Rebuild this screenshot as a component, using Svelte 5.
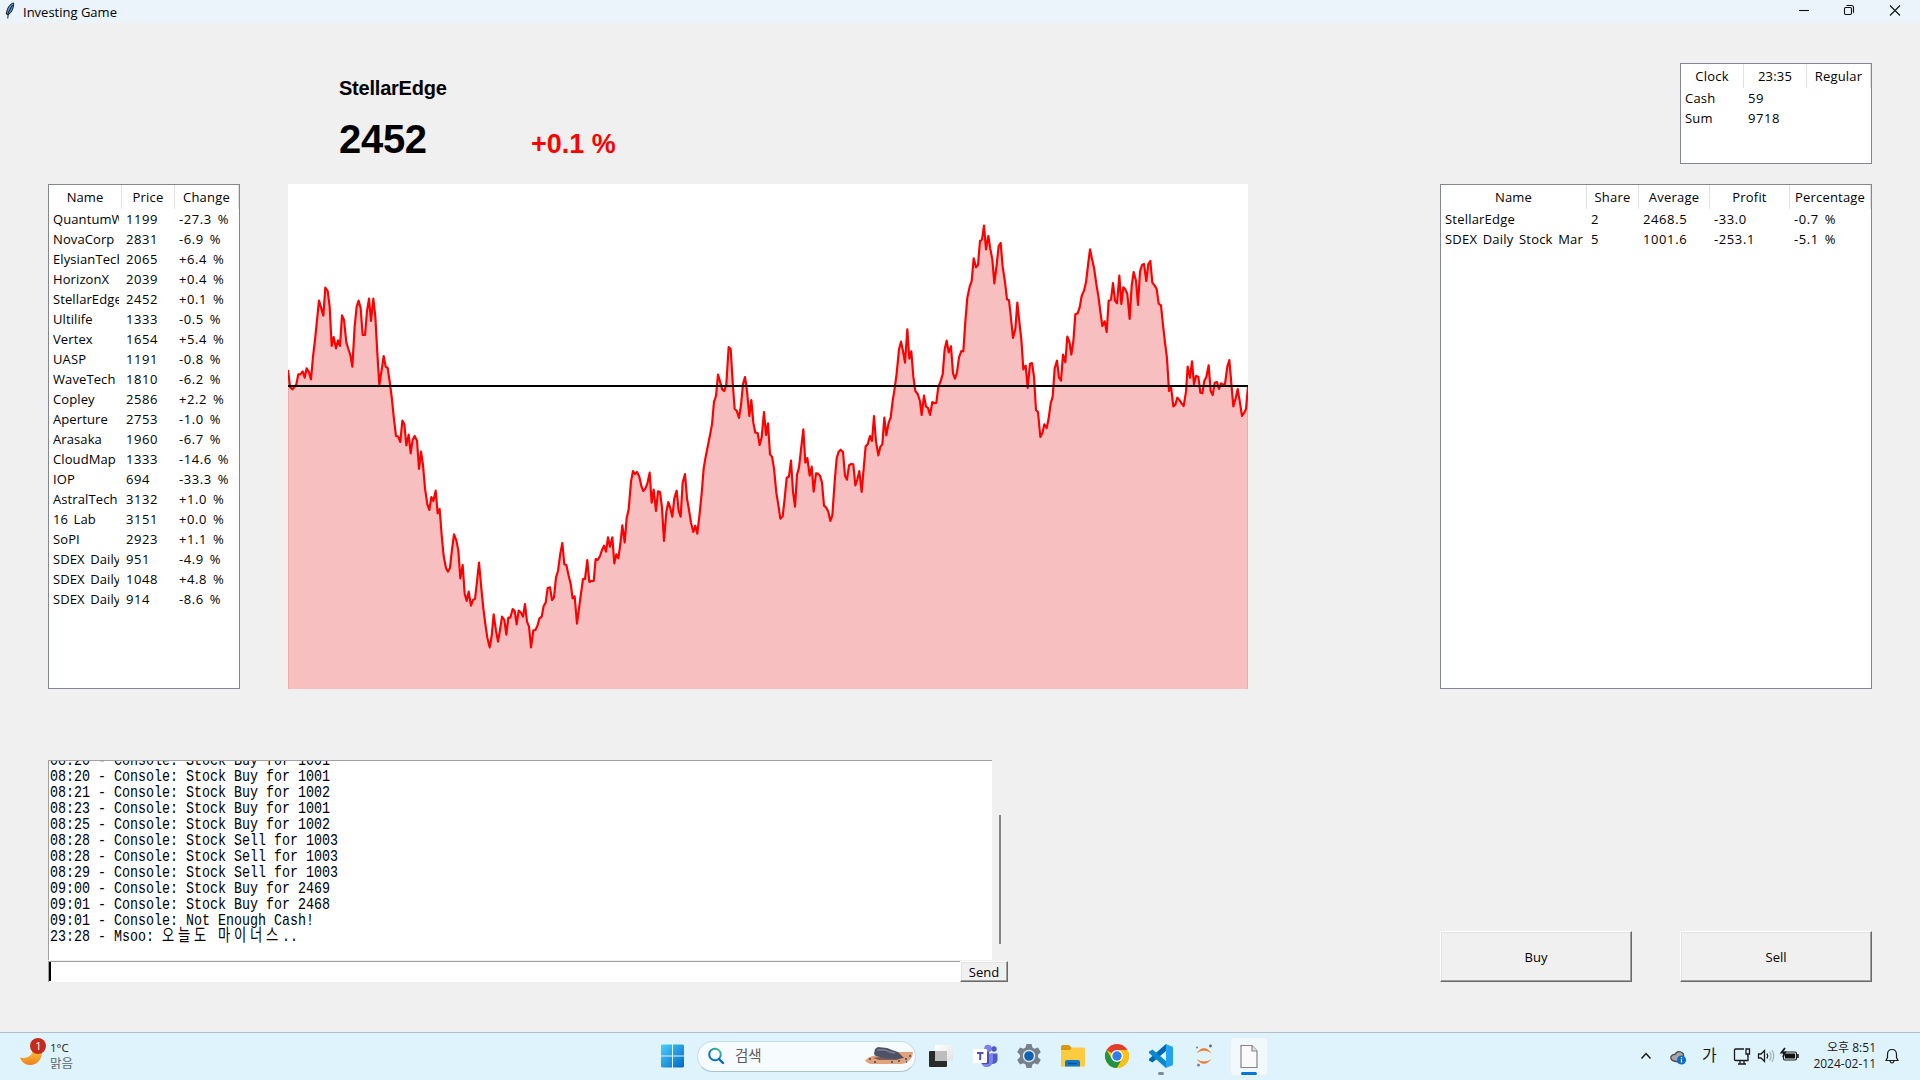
<script>
  const stocks = [
    ['QuantumW', '1199', '-27.3 %'], ['NovaCorp', '2831', '-6.9 %'], ['ElysianTech', '2065', '+6.4 %'],
    ['HorizonX', '2039', '+0.4 %'], ['StellarEdge', '2452', '+0.1 %'], ['Ultilife', '1333', '-0.5 %'],
    ['Vertex', '1654', '+5.4 %'], ['UASP', '1191', '-0.8 %'], ['WaveTech', '1810', '-6.2 %'],
    ['Copley', '2586', '+2.2 %'], ['Aperture', '2753', '-1.0 %'], ['Arasaka', '1960', '-6.7 %'],
    ['CloudMap', '1333', '-14.6 %'], ['IOP', '694', '-33.3 %'], ['AstralTech', '3132', '+1.0 %'],
    ['16 Lab', '3151', '+0.0 %'], ['SoPI', '2923', '+1.1 %'], ['SDEX Daily', '951', '-4.9 %'],
    ['SDEX Daily', '1048', '+4.8 %'], ['SDEX Daily', '914', '-8.6 %'],
  ];
  const holdings = [
    ['StellarEdge', '2', '2468.5', '-33.0', '-0.7 %'],
    ['SDEX Daily Stock Mar', '5', '1001.6', '-253.1', '-5.1 %'],
  ];
  const account = [['Cash', '59', ''], ['Sum', '9718', '']];
  const log = [
    '08:20 - Console: Stock Buy for 1001', '08:20 - Console: Stock Buy for 1001',
    '08:21 - Console: Stock Buy for 1002', '08:23 - Console: Stock Buy for 1001',
    '08:25 - Console: Stock Buy for 1002', '08:28 - Console: Stock Sell for 1003',
    '08:28 - Console: Stock Sell for 1003', '08:29 - Console: Stock Sell for 1003',
    '09:00 - Console: Stock Buy for 2469', '09:01 - Console: Stock Buy for 2468',
    '09:01 - Console: Not Enough Cash!',
  ];

  // Price history in thirds of a pixel, in three blocks: [x offset, samples].
  const blocks = [
    [-24, '24,570 30,620 37,628 43,621 49,613 55,583 61,583 68,574 74,593 80,565 87,577 93,598 99,530 105,480 111,420 117,362 124,386 130,407 136,323 143,333 149,380 155,498 161,471 168,505 174,481 180,498 186,406 192,420 199,487 205,507 211,525 217,560 224,440 230,380 236,362 242,385 248,465 255,465 261,393 267,356 273,423 280,356 286,410 292,520 298,615 305,570 311,528 317,560 323,564 329,605 335,650 342,718 348,768 354,769 361,786 367,722 373,732 379,796 386,764 392,820 398,779 404,768 411,782 417,867 423,815 429,855 435,925 442,973 448,990 454,951 460,963 467,932 473,1000 479,987 485,1065 491,1128 498,1164 504,1175 510,1163 516,1108 522,1063 529,1081 535,1112 541,1195 548,1155 554,1241 560,1263 566,1235 573,1277 579,1260 585,1257 591,1205 597,1148 604,1225 610,1285 616,1332 622,1373 629,1402 635,1368 641,1303 648,1352 654,1385 660,1350 666,1310 673,1320 679,1364 685,1313 691,1313 698,1287 704,1293 710,1333 716,1292 722,1297 729,1310 735,1272 741,1325 747,1340 753,1402 760,1351 766,1350 772,1338 778,1316 785,1310 791,1278 797,1268 803,1224 810,1222 816,1260 822,1252 828,1192 834,1173 841,1120 847,1089 853,1153 859,1155 866,1187 872,1211 878,1255 884,1249 891,1331 897,1285 903,1240 909,1197 915,1197 922,1140 928,1206 934,1203 941,1203 947,1137 953,1140'],
    [936, '0,1128 6,1110 12,1097 18,1115 24,1072 30,1100 37,1072 43,1150 49,1123 55,1135 61,1092 67,1036 74,1087 80,1015 86,988 93,905 99,873 105,882 111,876 118,890 124,918 130,933 136,926 142,911 149,878 155,968 161,929 168,993 174,934 180,936 186,983 192,1083 199,995 205,966 211,985 217,1010 223,955 230,932 236,993 242,1010 248,908 255,882 261,955 267,990 273,1028 280,1056 286,1037 292,1061 299,1000 305,940 311,865 317,830 323,800 330,765 336,733 342,665 348,648 354,584 361,608 367,629 373,633 379,612 386,501 392,507 398,605 404,687 410,692 417,714 423,675 429,612 435,591 441,633 448,708 454,660 460,728 466,758 473,759 479,795 485,772 492,696 498,765 504,730 510,823 516,830 522,865 529,938 535,975 541,1016 548,1009 554,955 560,894 567,889 573,842 579,935 585,980 591,884 597,863 604,800 610,748 616,848 622,834 629,887 635,860 641,935 648,880 654,881 660,887 666,908 672,977 679,983 685,995 691,1023 697,1006 704,905 710,835 716,815 722,809 729,816 735,887 741,899 747,856 753,852 760,853 766,916 772,898 778,873 785,936 791,865 797,799 803,793 810,768 816,783 822,708 828,785 835,826 841,800 847,793 853,713 859,766 866,728 872,713 878,663 884,625 890,580 897,508 903,485 909,513 915,548 922,448 928,536 934,514 940,590 946,633 953,642'],
    [1896, '0,663 5,705 12,647 18,679 24,684 30,705 37,666 43,670 49,668 55,620 61,606 68,583 74,508 80,482 86,517 93,499 99,580 105,596 111,577 117,532 124,513 130,514 136,425 142,353 149,320 155,303 161,235 168,262 174,255 180,183 186,179 192,137 198,208 205,168 211,207 217,238 223,310 230,255 236,198 242,189 248,260 255,306 261,358 267,361 273,415 279,474 286,447 292,368 298,425 304,478 310,568 317,557 323,624 330,551 336,549 342,590 348,690 354,696 361,771 367,760 373,733 380,744 386,715 392,670 398,650 404,566 411,542 417,593 423,602 429,524 436,547 442,470 448,484 454,524 460,484 466,403 473,400 479,382 485,348 492,332 498,307 504,256 510,208 516,237 522,263 529,312 535,348 541,395 547,438 554,424 560,456 566,362 573,359 579,309 585,362 591,370 598,287 604,372 610,322 616,328 622,342 629,417 635,318 641,276 648,302 654,375 660,275 666,255 672,252 679,303 685,252 691,243 697,308 704,317 710,327 716,371 723,376 729,435 735,488 741,535 747,633 753,620 760,679 766,674 772,653 779,661 785,671 791,678 798,635 803,560 810,593 816,544 822,613 828,588 835,590 841,638 847,640 853,602 859,591 866,556 872,633 878,645 884,608 891,606 897,627 903,610 909,614 915,612 922,560 928,540 934,610 940,679 947,655 953,627 959,662 966,708 972,699 978,687 984,618'],
  ];
  const line = blocks
    .flatMap(([dx, text]) => text.split(' ').map((pair) => {
      const [x, y] = pair.split(',').map(Number);
      return `${x + dx},${y - 12}`;
    }))
    .join(' ');
</script>

{#snippet table(kind, heads, rows)}
  <div class="tree {kind}">
    <div class="row head">
      {#each heads as h}<span>{h}</span>{/each}
    </div>
    {#each rows as r}
      <div class="row">
        {#each r as c}<span>{c}</span>{/each}
      </div>
    {/each}
  </div>
{/snippet}

<div class="screen">
  <header class="titlebar">
    <svg class="feather" width="10" height="17" viewBox="0 0 10 17">
      <path d="M8.600 1C5 1.800 2 6 1.300 12L3.500 12.800C7 10 9 5 8.600 1Z" fill="#5b93d0" stroke="#151a22" stroke-width="1" />
      <path d="M7.500 3L3.200 11 2.800 16.500" fill="none" stroke="#15202c" stroke-width="1" />
    </svg>
    <span class="title">Investing Game</span>
    <svg class="controls" width="110" height="22" viewBox="0 0 110 22" fill="none" stroke="#111" stroke-width="1.100">
      <path d="M4 10.500H14" />
      <rect x="49.500" y="7.500" width="7" height="7" rx="1.200" />
      <path d="M51.500 5.500H56.500Q58.500 5.500 58.500 7.500V12.800" />
      <path d="M95 5.500L105 15.500M105 5.500L95 15.500" />
    </svg>
  </header>

  <section class="top">
    <div class="quote">
      <h1>StellarEdge</h1>
      <div class="figures"><strong>2452</strong><em>+0.1 %</em></div>
    </div>
    {@render table('account', ['Clock', '23:35', 'Regular'], account)}
  </section>

  <section class="middle">
    {@render table('stocks', ['Name', 'Price', 'Change'], stocks)}
    <svg class="chart" width="960" height="505" viewBox="0 0 2880 1515">
      <rect width="2880" height="1515" fill="#fff" />
      <polygon points="0,1515 {line} 2880,1515" fill="#f7bfc0" />
      <path d="M1 560V1515M2879 610V1515" stroke="#f2a5a6" stroke-width="3" />
      <polyline points={line} fill="none" stroke="#f00" stroke-width="6.500" stroke-linejoin="round" />
      <path d="M0 606H2880" stroke="#000" stroke-width="6" />
    </svg>
    {@render table('holdings', ['Name', 'Share', 'Average', 'Profit', 'Percentage'], holdings)}
  </section>

  <section class="bottom">
    <div class="console">
      <div class="upper">
        <div class="log">
          <div class="lines">
            {#each log as l}<p>{l}</p>{/each}
            <p>23:28 - Msoo: <span class="ko">오늘도</span> <span class="ko">마이너스</span>..</p>
          </div>
        </div>
        <div class="track"><div class="thumb"></div></div>
      </div>
      <div class="entry"><div class="field"><i></i></div><button class="send">Send</button></div>
    </div>
    <div class="actions"><button>Buy</button><button>Sell</button></div>
  </section>

  <footer class="taskbar">
    <div class="weather">
      <svg width="28" height="30" viewBox="0 0 28 30">
        <defs><linearGradient id="moon" x1="0" y1="0" x2="0" y2="1"><stop offset="0" stop-color="#f7c53d" /><stop offset="1" stop-color="#ef7f1c" /></linearGradient></defs>
        <path d="M1 20.500C8 22 13 19 14 13H23C24 22 18 28 11 28C6 28 2.500 25 1 20.500Z" fill="url(#moon)" />
        <circle cx="19" cy="9" r="8" fill="#c42b1c" />
        <text x="19.500" y="13" text-anchor="middle" class="badge">1</text>
      </svg>
      <div class="temp"><span>1°C</span><span class="dim">맑음</span></div>
    </div>

    <div class="apps">
      <svg class="start" width="24" height="24" viewBox="0 0 24 24">
        <defs><linearGradient id="win" x1="0" y1="0" x2="1" y2="1"><stop offset="0" stop-color="#4ad0fb" /><stop offset="1" stop-color="#0067c6" /></linearGradient></defs>
        <path d="M2 .5H12V11.500H1V1.500ZM13 .5H23L24 1.500V11.500H13ZM1 12.500H12V23.500H2L1 22.500ZM13 12.500H24V22.500L23 23.500H13Z" fill="url(#win)" />
      </svg>

      <div class="search">
        <svg width="18" height="18" viewBox="0 0 18 18" fill="none">
          <defs><linearGradient id="lens" x1="0" y1="1" x2="1" y2="0"><stop offset=".3" stop-color="#0b6fc4" /><stop offset="1" stop-color="#44d07c" /></linearGradient></defs>
          <circle cx="8" cy="7.500" r="5.800" stroke="url(#lens)" stroke-width="2" />
          <path d="M12 12L16 16" stroke="#0a64b8" stroke-width="2.400" stroke-linecap="round" />
        </svg>
        <span>검색</span>
        <svg class="rock" width="50" height="18" viewBox="0 0 50 18">
          <path d="M1 14Q3 10 12 8L26 5H49L48 10Q44 17 37 17H6Z" fill="#e0a37c" />
          <path d="M9 11Q20 8 38 11L33 13H15Z" fill="#7d5c58" />
          <path d="M10 7L11 2 14 0 23 1 28 3 34 5 38 9 40 11 30 12 20 11 12 9Z" fill="#4d5266" />
          <path d="M13 3L21 3 26 5 31 6" stroke="#7b8198" stroke-width="1.300" fill="none" />
          <path d="M5 12h2M10 15h2M27 15h2M34 14h2M41 12h2M45 9h2M42 15h1" stroke="#3b4668" stroke-width="1.600" />
        </svg>
      </div>

      <svg class="task" width="26" height="24" viewBox="0 0 26 24">
        <defs><linearGradient id="pane" x1="0" y1="0" x2="1" y2="1"><stop offset="0" stop-color="#fff" /><stop offset="1" stop-color="#e2e2e2" /></linearGradient></defs>
        <rect x="1" y="7" width="18" height="16" rx="1" fill="#2a2a2a" />
        <rect x="7" y="1" width="18" height="16" rx="1" fill="url(#pane)" />
        <path d="M7 7H19V17H8Q7 17 7 16Z" fill="#bdbdbd" />
      </svg>
      <svg class="teams" width="26" height="24" viewBox="0 0 26 24">
        <circle cx="15" cy="4.500" r="3.800" fill="#7b83eb" /><circle cx="21" cy="5" r="2.700" fill="#5059c9" />
        <path d="M18 9.500H24.500V16Q24 20 19 20Z" fill="#5059c9" />
        <path d="M8 9.500H20V17Q19 23 13.500 23Q9 23 8 18Z" fill="#7b83eb" />
        <path d="M8 8H16V20H9Z" fill="#4a50ad" />
        <rect x="0" y="5" width="14" height="14" rx="1" fill="#fff" />
        <path d="M4 9H10.500M7.200 9V16" stroke="#4b53bc" stroke-width="2" />
      </svg>
      <svg class="gear" width="26" height="26" viewBox="0 0 26 26">
        <path d="M10.500 1H15.500L16.500 4.500 18.500 5.700 22 4.600 24.800 9 22 12V14L24.800 17 22 21.400 18.500 20.300 16.500 21.500 15.500 25H10.500L9.500 21.500 7.500 20.300 4 21.400 1.200 17 4 14V12L1.200 9 4 4.600 7.500 5.700 9.500 4.500Z" fill="#75808a" />
        <circle cx="13" cy="13" r="6.200" fill="#dfe6eb" /><circle cx="13" cy="13" r="4.800" fill="#0f62ae" />
      </svg>
      <svg class="folder" width="26" height="24" viewBox="0 0 26 24">
        <path d="M1 3Q1 1 3 1H9L12 4V7H1Z" fill="#d9980b" />
        <path d="M1 6H10L12 3.500H23Q25 3.500 25 5.500V22.500H1Z" fill="#fdcb3f" />
        <path d="M5 22.500V18Q5 16 7 16H18Q20 16 20 18V22.500Z" fill="#1476c6" /><path d="M8 19.500H17" stroke="#0a4f91" stroke-width="1.300" />
      </svg>
      <svg class="chrome" width="26" height="26" viewBox="0 0 26 26">
        <circle cx="13" cy="13" r="12" fill="#fbc116" />
        <path d="M13 13L2.600 7A12 12 0 0 1 23.400 7H13Z" fill="#e33b2e" />
        <path d="M2.600 7A12 12 0 0 0 13 25L18.200 16 13 13 7.800 16Z" fill="#229342" />
        <path d="M13 7H23.400A12 12 0 0 1 13 25L18.200 16Z" fill="#fbc116" />
        <circle cx="13" cy="13" r="6" fill="#fff" /><circle cx="13" cy="13" r="4.700" fill="#2f7de9" />
      </svg>
      <div class="code">
        <svg width="26" height="26" viewBox="0 0 26 26">
          <path d="M18 1L25 4V22L18 25Z" fill="#24a4ee" />
          <path d="M18 1V8L4.500 19.500 1 17.500V16Z" fill="#0069b4" />
          <path d="M18 25V18L4.500 6.500 1 8.500V10Z" fill="#0a87d0" />
        </svg>
        <i></i>
      </div>
      <svg class="jupyter" width="20" height="26" viewBox="0 0 20 26">
        <path d="M2.500 10Q10 .5 17.500 10Q10 5 2.500 10ZM2.500 16Q10 25.500 17.500 16Q10 21 2.500 16Z" fill="#f37726" />
        <circle cx="16.500" cy="3" r="1.400" fill="#666" /><circle cx="3" cy="4.500" r="1" fill="#777" /><circle cx="4.500" cy="22" r="1.600" fill="#888" />
      </svg>
      <div class="active">
        <svg width="20" height="25" viewBox="0 0 20 25">
          <path d="M2 1.500H13L18 7V23.500H2Z" fill="#fafafa" stroke="#858585" stroke-width="1.200" />
          <path d="M13 1.500V7H18" fill="#e5e5e5" stroke="#858585" stroke-width="1.200" />
        </svg>
        <i></i>
      </div>
    </div>

    <div class="tray">
      <svg class="status" width="180" height="28" viewBox="0 0 180 28" fill="none" stroke="#1a1a1a" stroke-width="1.300">
        <path d="M1.500 16.500L6 11.500 10.500 16.500" stroke-width="1.500" />
        <path d="M34 19Q30 18 31 14.500Q33 12 35 12.500Q37 8.500 41 10Q44 11 43.500 14L38 20Z" fill="#a6a6a6" stroke="#4b4b4b" />
        <circle cx="41.500" cy="18" r="4.500" fill="#0a6cc8" stroke="none" /><path d="M41.500 17.300V20.500M41.500 15V16.300" stroke="#fff" />
        <path d="M104 7H95.500Q94.500 7 94.500 8V17.500Q94.500 18.500 95.500 18.500H108V13.500M98 22H106M100 18.500V22M104 18.500V22" />
        <path d="M106 7H109.500V12H106ZM107.800 12V14.500" />
        <path d="M118.500 12H121L124.500 8.500V19.500L121 16H118.500Z" /><path d="M127 11.500Q128.500 14 127 16.500" />
        <path d="M129.500 9.500Q132.500 14 129.500 18.500M132 8Q135.500 14 132 20" stroke="#a5b4bc" />
        <rect x="143.500" y="10" width="13" height="8" rx="1.500" stroke-width="1.200" /><rect x="145" y="11.500" width="10" height="5" fill="#111" stroke="none" />
        <path d="M158 12V16" stroke-width="1.600" />
        <path d="M145 6L141.500 10.500H145L143 15" stroke-width="1.800" />
      </svg>
      <span class="ime">가</span>
      <div class="clock"><span>오후 8:51</span><span>2024-02-11</span></div>
      <svg class="bell" width="14" height="17" viewBox="0 0 14 17" fill="none" stroke="#1a1a1a" stroke-width="1.200">
        <path d="M1 12.500L2.500 9.500V6.500Q2.500 1.500 7 1.500Q11.500 1.500 11.500 6.500V9.500L13 12.500ZM5 13Q5.500 15 7 15Q8.500 15 9 13" />
      </svg>
    </div>
  </footer>
</div>

<style>
  :global(body) { overflow: hidden; }
  .screen {
    width: 1920px; height: 1080px; display: flex; flex-direction: column; background: #f0f0f0;
    font: 13px 'Open Sans', 'Noto Sans CJK KR', sans-serif; color: #000;
  }
  .titlebar { height: 23px; display: flex; align-items: center; background: #ebf4fa; padding: 0 15px 0 5px; }
  .feather { margin-top: -2px; }
  .title { margin-left: 8px; font-size: 13px; line-height: 22px; flex: 1; }
  .controls { width: 110px; margin-top: -2px; }

  .top { height: 161px; display: flex; justify-content: space-between; padding: 0 48px 0 339px; }
  .quote { font-family: 'Liberation Sans', Arial, sans-serif; font-weight: bold; padding-top: 53px; }
  h1 { margin: 0; font-size: 20px; letter-spacing: -.22px; line-height: 24px; }
  .figures { display: flex; align-items: baseline; width: 300px; margin-top: 15px; line-height: 48px; }
  strong { font-size: 40px; width: 192px; letter-spacing: -.3px; }
  em { font-style: normal; font-size: 27px; color: #f00; }

  .tree { box-sizing: border-box; background: #fff; border: 1px solid #828790; overflow: hidden; }
  .row { display: grid; height: 20px; line-height: 20px; letter-spacing: .2px; word-spacing: 2px; }
  .row span { overflow: hidden; white-space: nowrap; margin: 0 3px 0 4px; }
  .row span:not(:first-child) { letter-spacing: .6px; }
  .head { height: 24px; line-height: 24px; }
  .head span, .row.head span:not(:first-child) { margin: 0; text-align: center; border-right: 1px solid #e2e2e2; letter-spacing: .2px; }
  .account { width: 192px; height: 101px; margin-top: 40px; }
  .account .row { grid-template-columns: 63px 63px 64px; }
  .stocks { width: 192px; height: 505px; }
  .stocks .row { grid-template-columns: 73px 53px 64px; }
  .stocks .row span:first-child { letter-spacing: .1px; }
  .stocks .row span:last-child { margin-right: 0; }
  .holdings { width: 432px; height: 505px; margin-left: auto; }
  .holdings .row { grid-template-columns: 146px 52px 71px 80px 81px; }

  .middle { height: 505px; display: flex; padding: 0 48px; }
  .chart { margin-left: 48px; display: block; }

  .bottom { height: 343px; display: flex; justify-content: space-between; padding: 71px 48px 0; box-sizing: border-box; }
  .console { width: 960px; }
  .upper { display: flex; height: 201px; }
  .log { width: 944px; height: 200px; box-sizing: border-box; background: #fff; border: 1px solid #a0a0a0; border-width: 1px 0 0 1px; overflow: hidden; padding: 1px; }
  .lines { margin-top: -9px; transform: scaleX(.784); transform-origin: 0 0; width: 1100px; }
  .lines p { margin: 0; height: 16px; font: 17px/16px 'Liberation Mono', 'Noto Sans CJK KR', monospace; white-space: pre; }
  .ko { font-size: 17px; letter-spacing: 4.760px; }
  .track { padding: 55px 0 0 7px; }
  .thumb { width: 2px; height: 129px; background: #858585; }
  .entry { display: flex; height: 21px; }
  .field { width: 911px; background: #fff; border-top: 1px solid #a0a0a0; border-left: 1px solid #a0a0a0; }
  .field i { display: block; width: 2px; height: 19px; background: #000; }
  button {
    font: inherit; color: #000; padding: 0; background: #f0f0f0; border: 1px solid; border-color: #fff #696969 #696969 #fff;
    box-shadow: inset -1px -1px #a0a0a0, inset 1px 1px #e3e3e3; border-radius: 0;
  }
  .send { width: 48px; height: 21px; line-height: 18px; }
  .actions { display: flex; gap: 48px; padding-top: 171px; }
  .actions button { width: 192px; height: 51px; padding-top: 1px; }

  .taskbar {
    height: 48px; box-sizing: border-box; border-top: 1px solid #b3bfc6; background: #dff3fc;
    display: grid; grid-template-columns: 660px 608px 1fr; color: #1a1a1a; font-size: 12px;
  }
  .weather { display: flex; padding: 4px 0 0 19px; }
  .badge { font-size: 11px; fill: #fff; }
  .temp { display: flex; flex-direction: column; line-height: 16px; padding-top: 3px; margin-left: 3px; font-size: 11.500px; }
  .dim { color: #5d686e; font-size: 12.500px; }
  .apps { display: flex; align-items: center; height: 46px; }
  .apps > * { flex: none; }
  .search {
    width: 219px; height: 31px; box-sizing: border-box; margin-left: 13px; border: 1px solid #c6dde8; border-bottom-color: #a9c3cf;
    border-radius: 16px; background: #f6fbfe; display: flex; align-items: center; padding: 0 1px 0 9px; color: #5c5c5c; font-size: 14.500px;
  }
  .search span { margin-left: 10px; flex: 1; line-height: 20px; padding-bottom: 1px; }
  .task { margin-left: 12px; }
  .teams { margin-left: 19px; }
  .gear { margin-left: 17px; }
  .folder { margin-left: 18px; }
  .chrome { margin-left: 18px; }
  .code { margin-left: 18px; display: flex; flex-direction: column; align-items: center; height: 32px; justify-content: space-between; margin-top: 6px; }
  .code i { width: 6px; height: 3px; border-radius: 2px; background: #7f8b92; }
  .jupyter { margin-left: 20px; }
  .active {
    margin-left: 16px; width: 38px; height: 39px; box-sizing: border-box; border: 1px solid #e6f1f6; border-radius: 4px; background: #f1f9fd;
    display: flex; flex-direction: column; align-items: center; padding-top: 6px; justify-content: space-between;
  }
  .active i { width: 16px; height: 3px; border-radius: 2px; background: #0078d4; }
  .tray { display: flex; align-items: center; height: 46px; margin-left: 372px; position: relative; }
  .status { flex: none; }
  .ime { position: absolute; left: 62px; top: 10px; font-size: 16px; line-height: 24px; }
  .clock { display: flex; flex-direction: column; align-items: flex-end; line-height: 16px; width: 56px; white-space: nowrap; }
  .bell { margin-left: 9px; flex: none; }
</style>
